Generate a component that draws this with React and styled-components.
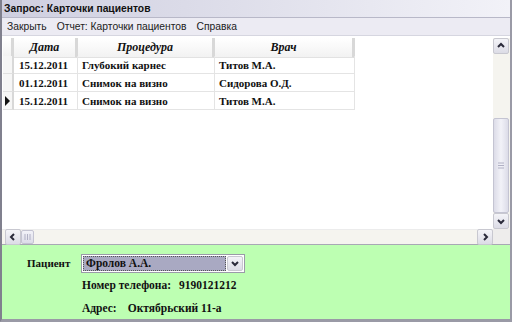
import React from 'react';
import styled, {createGlobalStyle} from 'styled-components';

const Global = createGlobalStyle`
  html, body { margin: 0; padding: 0; background: #fff; }
  body { width: 512px; height: 322px; overflow: hidden; }
`

const Window = styled.div`
  width: 512px;
  height: 322px;
  box-sizing: border-box;
  display: flex;
  flex-direction: column;
  border-left: 2px solid #80808e;
  border-right: 2px solid #9a9aa6;
  border-bottom: 3px solid #9a9aa6;
  background: #fff;
`

const TitleBar = styled.div`
  height: 17px;
  flex: none;
  display: flex;
  align-items: center;
  padding-left: 2px;
  background: linear-gradient(90deg, #cfcfe0 0%, #dedeea 45%, #f2f2f8 100%);
  border-bottom: 1px solid #b8b8c8;
  font: bold 10.3px "Liberation Sans", Arial, sans-serif;
  color: #111;
`

const MenuBar = styled.div`
  height: 17px;
  flex: none;
  display: flex;
  align-items: center;
  gap: 10px;
  padding-left: 5px;
  background: #ecebf3;
  border-bottom: 1px solid #d6d6e0;
  font: 10.3px "Liberation Sans", Arial, sans-serif;
  color: #222;
`

const GridArea = styled.div`
  flex: 1;
  display: grid;
  grid-template-columns: 1fr 17px;
  grid-template-rows: 1fr 15px;
  padding-top: 2px;
  background: #fff;
  border-bottom: 1px solid #a8a8b4;
`

const Table = styled.div`
  align-self: start;
  display: grid;
  grid-template-columns: 11px 64px 137px 140px;
  grid-auto-rows: 18px;
  margin-left: 1px;
  font: bold 11px "Liberation Serif", "Times New Roman", serif;
  color: #111;
`

const HeadCell = styled.div`
  display: flex;
  align-items: center;
  justify-content: center;
  height: 20px;
  box-sizing: border-box;
  background: linear-gradient(#ffffff, #f2f2f2);
  border-right: 3px solid #d8d8d8;
  border-bottom: 1px solid #e2e2e2;
  font-style: italic;
  font-size: 12px;
`

const RowHead = styled.div`
  display: flex;
  align-items: center;
  justify-content: center;
  box-sizing: border-box;
  background: #f6f6f6;
  border-right: 2px solid #d8d8d8;
  border-bottom: 1px solid #e0e0e0;
`

const Cell = styled.div`
  display: flex;
  align-items: center;
  padding-left: ${p => p.$pad || 4}px;
  box-sizing: border-box;
  border-right: 1px solid #e4e4e4;
  border-bottom: 1px solid #e4e4e4;
  white-space: nowrap;
`

const Arrow = styled.div`
  width: 0;
  height: 0;
  border-top: 5px solid transparent;
  border-bottom: 5px solid transparent;
  border-left: 5px solid #111;
`

const VScroll = styled.div`
  display: flex;
  flex-direction: column;
  background: #f5f4ef;
`

const HScroll = styled.div`
  display: flex;
  align-items: center;
  background: #f5f4ef;
  padding-left: 3px;
  border-top: 1px solid #ececec;
`

const Corner = styled.div`
  background: #eeedec;
`

const ScrollBtn = styled.div`
  width: 16px;
  height: 16px;
  flex: none;
  box-sizing: border-box;
  border: 1px solid #c8c8d0;
  border-radius: 2px;
  background: linear-gradient(#f4f4f8, #dcdce6);
  display: flex;
  align-items: center;
  justify-content: center;
`

const Track = styled.div`
  flex: 1;
  display: flex;
  flex-direction: ${p => p.$vertical ? 'column' : 'row'};
  justify-content: ${p => p.$vertical ? 'flex-end' : 'flex-start'};
`

const Thumb = styled.div`
  box-sizing: border-box;
  border: 1px solid #c4c4d2;
  border-radius: 2px;
  background: ${p => p.$vertical
    ? 'linear-gradient(90deg, #dcdce8, #f2f2f8 50%, #dcdce8)'
    : 'linear-gradient(#f2f2f8, #dcdce8)'};
  width: ${p => p.$vertical ? '16px' : '13px'};
  height: ${p => p.$vertical ? '95px' : '14px'};
  display: flex;
  align-items: center;
  justify-content: center;
`

const Panel = styled.div`
  height: 74px;
  flex: none;
  box-sizing: border-box;
  background: #bdffb2;
  display: grid;
  grid-template-columns: 54px auto;
  grid-template-rows: 20px 24px 22px;
  align-items: center;
  padding: 8px 0 0 25px;
  font: bold 11px "Liberation Serif", "Times New Roman", serif;
  color: #111;
`

const FieldLabel = styled.div`
  grid-column: 1;
`

const Info = styled.div`
  grid-column: 2;
  display: flex;
  gap: ${p => p.$gap}px;
  padding-left: 1px;
  font-size: 11.5px;
`

const Combo = styled.div`
  width: 164px;
  height: 19px;
  box-sizing: border-box;
  display: flex;
  align-items: center;
  border: 1px solid #9a9aa8;
  background: #fff;
  padding: 1px;
`

const ComboText = styled.div`
  flex: 1;
  height: 15px;
  display: flex;
  align-items: center;
  padding-left: 2px;
  margin-right: 1px;
  background: #a9a9c2;
  border: 1px dotted #555;
  box-sizing: border-box;
  font-size: 11.5px;
`

const ComboBtn = styled(ScrollBtn)`
  width: 16px;
  height: 15px;
`

const Chevron = ({dir}) => {
  const d = {
    up: 'M3 7 L6 4 L9 7',
    down: 'M3 5 L6 8 L9 5',
    left: 'M7 3 L4 6 L7 9',
    right: 'M5 3 L8 6 L5 9',
  }[dir];
  return (
    <svg width="12" height="12" viewBox="0 0 12 12">
      <path d={d} fill="none" stroke="#2a2a3a" strokeWidth="2" />
    </svg>
  );
};

const Grip = ({vertical}) => (
  <svg width="8" height="8" viewBox="0 0 8 8">
    {[1, 3.5, 6].map(v => vertical
      ? <line key={v} x1="1" x2="7" y1={v} y2={v} stroke="#b0b0c4" strokeWidth="1" />
      : <line key={v} y1="1" y2="7" x1={v} x2={v} stroke="#b0b0c4" strokeWidth="1" />)}
  </svg>
);

const rows = [
  {date: '15.12.2011', proc: 'Глубокий карнес', doctor: 'Титов М.А.'},
  {date: '01.12.2011', proc: 'Снимок на визно', doctor: 'Сидорова О.Д.'},
  {date: '15.12.2011', proc: 'Снимок на визно', doctor: 'Титов М.А.', current: true},
];

export default function App() {
  return (
    <Window>
      <Global />
      <TitleBar>Запрос: Карточки пациентов</TitleBar>
      <MenuBar>
        <span>Закрыть</span>
        <span>Отчет: Карточки пациентов</span>
        <span>Справка</span>
      </MenuBar>
      <GridArea>
        <Table>
          <HeadCell />
          <HeadCell>Дата</HeadCell>
          <HeadCell>Процедура</HeadCell>
          <HeadCell>Врач</HeadCell>
          {rows.map((r, i) => (
            <React.Fragment key={i}>
              <RowHead>{r.current && <Arrow />}</RowHead>
              <Cell $pad={5}>{r.date}</Cell>
              <Cell>{r.proc}</Cell>
              <Cell>{r.doctor}</Cell>
            </React.Fragment>
          ))}
        </Table>
        <VScroll>
          <ScrollBtn><Chevron dir="up" /></ScrollBtn>
          <Track $vertical>
            <Thumb $vertical><Grip vertical /></Thumb>
          </Track>
          <ScrollBtn><Chevron dir="down" /></ScrollBtn>
        </VScroll>
        <HScroll>
          <ScrollBtn><Chevron dir="left" /></ScrollBtn>
          <Track>
            <Thumb><Grip /></Thumb>
          </Track>
          <ScrollBtn><Chevron dir="right" /></ScrollBtn>
        </HScroll>
        <Corner />
      </GridArea>
      <Panel>
        <FieldLabel>Пациент</FieldLabel>
        <Combo>
          <ComboText>Фролов А.А.</ComboText>
          <ComboBtn><Chevron dir="down" /></ComboBtn>
        </Combo>
        <Info $gap={8}><span>Номер телефона:</span><span>9190121212</span></Info>
        <Info $gap={11}><span>Адрес:</span><span>Октябрьский 11-а</span></Info>
      </Panel>
    </Window>
  );
}
